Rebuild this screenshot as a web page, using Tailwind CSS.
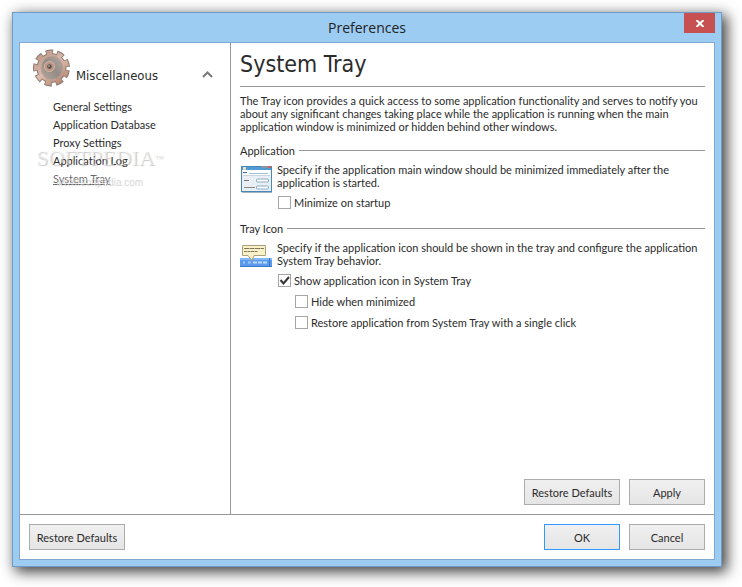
<!DOCTYPE html>
<html lang="en">
<head>
    <meta charset="UTF-8">
    <meta name="viewport" content="width=device-width, initial-scale=1.0">
    <title>Preferences</title>
    <script src="https://cdn.jsdelivr.net/npm/@tailwindcss/browser@4"></script>
</head>
<body class="flex min-h-screen bg-white pt-3 pr-5 pb-5 pl-3 font-[Lato,sans-serif] text-[11px] leading-[13px] text-[#2b2b2b]">
    <div class="flex flex-1 flex-col border border-[#6f9bc4] bg-[#9dccf3] px-[6px] pb-[6px] shadow-[4px_4px_13px_1px_rgba(0,0,0,0.75)]">
        <!-- Title bar -->
        <header class="relative flex h-[29px] items-center justify-center">
            <h1 class="font-['Open_Sans',sans-serif] text-sm text-[#222]">Preferences</h1>
            <button type="button" aria-label="Close" class="absolute top-0 right-0 flex h-5 w-[31px] items-center justify-center bg-[#c75050]">
                <svg class="h-[7px] w-2" viewBox="0 0 8 7" fill="none" stroke="#fff" stroke-width="2"><path d="M0.500 0L7.500 7M7.500 0L0.500 7"/></svg>
            </button>
        </header>

        <div class="flex flex-1 flex-col border border-[#7fa9d3] bg-white">
            <div class="flex flex-1">
                <!-- Sidebar -->
                <nav class="relative w-[211px] shrink-0 border-r border-[#979797] pt-1">
                    <button type="button" aria-expanded="true" class="flex w-full items-center pr-[17px] pl-3">
                        <svg class="h-11 w-11 shrink-0" viewBox="0 0 44 44" fill="none">
                            <defs>
                                <linearGradient id="gear" x1="0" y1="0" x2="1" y2="1">
                                    <stop offset="0" stop-color="#b99483"/><stop offset=".5" stop-color="#dcbdae"/><stop offset="1" stop-color="#b07d66"/>
                                </linearGradient>
                                <linearGradient id="disc" x1="0" y1="1" x2="1" y2="0">
                                    <stop offset="0" stop-color="#b5a69e"/><stop offset=".5" stop-color="#958c87"/><stop offset="1" stop-color="#b9aaa2"/>
                                </linearGradient>
                            </defs>
                            <g transform="rotate(8 19.500 21)">
                                <circle cx="19.500" cy="21" r="15.500" stroke="#8a7a73" stroke-width="6" stroke-dasharray="7 3.821"/>
                                <circle cx="19.500" cy="21" r="15" fill="#8a7a73"/>
                                <circle cx="19.500" cy="21" r="15.500" stroke="url(#gear)" stroke-width="4" stroke-dasharray="5.500 5.321" stroke-dashoffset="-.75"/>
                                <circle cx="19.500" cy="21" r="14" fill="url(#gear)"/>
                            </g>
                            <ellipse cx="20" cy="21" rx="11" ry="12" fill="url(#disc)" stroke="#c3a294"/>
                            <circle cx="17.500" cy="19.500" r="5" fill="#bb9582" stroke="#d5b8aa"/>
                            <circle cx="17.500" cy="19.500" r="2.200" fill="#554b47"/><circle cx="17" cy="19" r=".8" fill="#e8d8d0"/>
                        </svg>
                        <span class="pt-[13px] font-['DejaVu_Sans_Condensed',sans-serif] text-[13px] leading-4">Miscellaneous</span>
                        <svg class="mt-[10px] ml-auto h-[7px] w-[11px]" viewBox="0 0 11 7" fill="none" stroke="#7a7a7a" stroke-width="2"><path d="M1 6L5.500 1.500L10 6"/></svg>
                    </button>
                    <ul class="mt-[7px] flex flex-col pl-[33px] leading-[18px]">
                        <li><a href="#general">General Settings</a></li>
                        <li><a href="#database">Application Database</a></li>
                        <li><a href="#proxy">Proxy Settings</a></li>
                        <li><a href="#log">Application Log</a></li>
                        <li><a href="#tray" aria-current="page" class="text-[#6b6b6b] underline">System Tray</a></li>
                    </ul>
                    <div aria-hidden="true" class="pointer-events-none absolute top-[105px] left-4 w-max font-['Liberation_Serif',serif] text-white/50">
                        <p class="text-[22px] leading-5 [text-shadow:1px_1px_1px_rgba(0,0,0,0.22)]">SOFTPEDIA<sup class="text-[9px]">™</sup></p>
                        <p class="mt-[6px] pl-5 font-['Liberation_Sans',sans-serif] text-[10px] leading-4 [text-shadow:1px_1px_1px_rgba(0,0,0,0.22)]">www.softpedia.com</p>
                    </div>
                </nav>

                <!-- System Tray page -->
                <main class="flex flex-1 flex-col px-[9px] pb-[9px]">
                    <h2 class="border-b border-[#979797] pt-[5px] pb-[6px] font-['DejaVu_Sans_Condensed',sans-serif] text-[23px] leading-8">System Tray</h2>
                    <p class="mt-[7px]">The Tray icon provides a quick access to some application functionality and serves to notify you<br>about any significant changes taking place while the application is running when the main<br>application window is minimized or hidden behind other windows.</p>

                    <section class="mt-[11px]">
                        <h3 class="flex items-center gap-1">Application <span class="h-px flex-1 bg-[#979797]"></span></h3>
                        <div class="mt-[6px] flex gap-[5px]">
                            <svg class="mt-[3px] h-7 w-8 shrink-0" viewBox="0 0 32 28">
                                <rect x="1.500" y=".5" width="30" height="25" fill="#e9eff4" stroke="#4987b5"/>
                                <path fill="#4f9bd6" d="M2 1h29v3H2z"/><path fill="#c9605c" d="M28 0h3v2h-3z"/><path fill="#8a94a8" d="M21 0h7v2h-7z"/>
                                <path fill="#fff" d="M3 4h27v5H3z"/><path fill="#e8dcc8" d="M3 1h3v3H3z"/>
                                <path stroke="#3b709b" d="M3 6.500h4"/><path stroke="#9fc1dc" d="M9 7.500h19"/>
                                <path stroke="#cbd6df" d="M3 9.500h27"/>
                                <path stroke="#777" d="M4 14.500h5"/><path stroke="#888" d="M4 21.500h11"/>
                                <rect x="16.500" y="13" width="12" height="3" rx="1" fill="#fff" stroke="#88a9c5"/>
                                <rect x="16.500" y="20" width="12" height="3" rx="1" fill="#fff" stroke="#88a9c5"/>
                                <path stroke="#3f6d90" d="M2 26.500h30" opacity=".5"/>
                            </svg>
                            <div>
                                <p>Specify if the application main window should be minimized immediately after the<br>application is started.</p>
                                <label class="mt-[7px] flex items-center gap-[3px]">
                                    <input type="checkbox" class="ml-px h-[13px] w-[13px] appearance-none border border-[#a6a6a6] bg-white">
                                    Minimize on startup
                                </label>
                            </div>
                        </div>
                    </section>

                    <section class="mt-[13px]">
                        <h3 class="flex items-center gap-1">Tray Icon <span class="h-px flex-1 bg-[#979797]"></span></h3>
                        <div class="mt-[6px] flex gap-[5px]">
                            <svg class="mt-1 h-6 w-8 shrink-0" viewBox="0 0 32 24">
                                <path fill="#5b9bee" d="M0 13h32v9H0z"/><path fill="#83b8f7" d="M0 13h32v2H0z"/><path fill="#3975c5" d="M0 21h32v1H0zM29 13h1v9h-1z"/>
                                <path fill="#fbf1c9" stroke="#a8a17e" stroke-linejoin="round" d="M2.500.500h23v10H14l-2 5-4-5H2.500z"/>
                                <path stroke="#68634b" stroke-dasharray="5 .5" opacity=".85" d="M4 3.500h20"/><path stroke="#68634b" stroke-dasharray="3 .5" opacity=".85" d="M4 6.500h14"/>
                                <path stroke="#c4dbf9" stroke-width="2" stroke-dasharray="4 1" d="M13 17.500h14"/><path stroke="#a3c8f7" stroke-width="2" d="M3 17.500h2M8 17.500h3"/>
                            </svg>
                            <div>
                                <p>Specify if the application icon should be shown in the tray and configure the application<br>System Tray behavior.</p>
                                <label class="mt-[7px] flex items-center gap-[3px]">
                                    <span class="relative ml-px flex">
                                        <input type="checkbox" checked class="peer h-[13px] w-[13px] appearance-none border border-[#a6a6a6] bg-white">
                                        <svg class="pointer-events-none absolute inset-0 hidden peer-checked:block" viewBox="0 0 13 13" fill="none" stroke="#333" stroke-width="2"><path d="M2.500 6L5.500 9.500L11 3"/></svg>
                                    </span>
                                    Show application icon in System Tray
                                </label>
                                <div class="mt-2 ml-[17px] flex flex-col gap-2">
                                    <label class="flex items-center gap-[3px]">
                                        <input type="checkbox" class="ml-px h-[13px] w-[13px] appearance-none border border-[#a6a6a6] bg-white">
                                        Hide when minimized
                                    </label>
                                    <label class="flex items-center gap-[3px]">
                                        <input type="checkbox" class="ml-px h-[13px] w-[13px] appearance-none border border-[#a6a6a6] bg-white">
                                        Restore application from System Tray with a single click
                                    </label>
                                </div>
                            </div>
                        </div>
                    </section>

                    <div class="mt-auto flex justify-end gap-[9px]">
                        <button type="button" class="h-[26px] w-24 border border-[#acacac] bg-linear-to-b from-[#f0f0f0] to-[#e5e5e5]">Restore Defaults</button>
                        <button type="button" class="h-[26px] w-[76px] border border-[#acacac] bg-linear-to-b from-[#f0f0f0] to-[#e5e5e5]">Apply</button>
                    </div>
                </main>
            </div>

            <!-- Dialog buttons -->
            <footer class="flex gap-[9px] border-t border-[#979797] p-[9px]">
                <button type="button" class="mr-auto h-[26px] w-24 border border-[#acacac] bg-linear-to-b from-[#f0f0f0] to-[#e5e5e5]">Restore Defaults</button>
                <button type="submit" class="h-[26px] w-[76px] border border-[#3399ff] bg-linear-to-b from-[#f0f0f0] to-[#e5e5e5]">OK</button>
                <button type="button" class="h-[26px] w-[76px] border border-[#acacac] bg-linear-to-b from-[#f0f0f0] to-[#e5e5e5]">Cancel</button>
            </footer>
        </div>
    </div>
</body>
</html>
